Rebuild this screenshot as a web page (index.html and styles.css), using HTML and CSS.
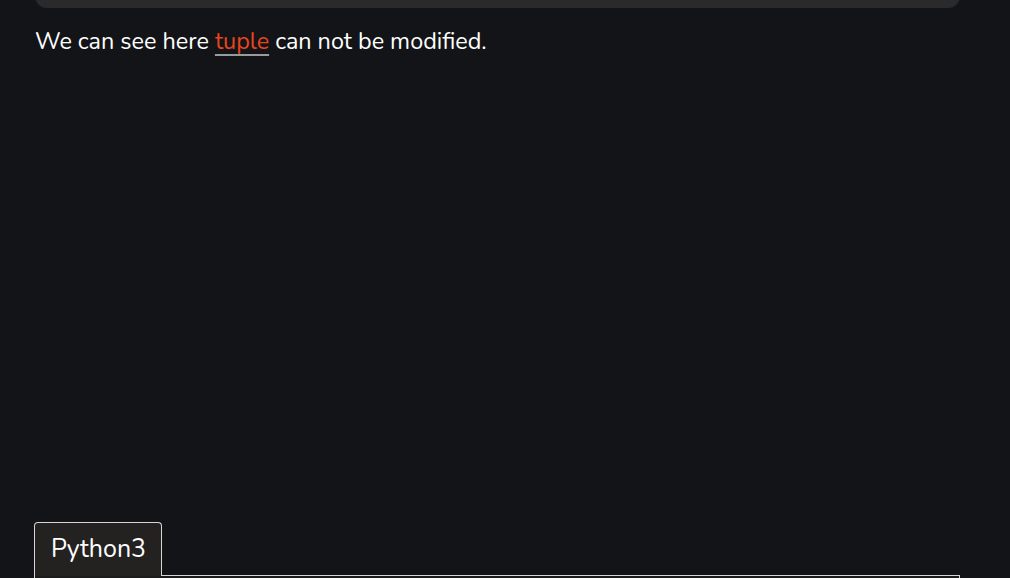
FILE: index.html
```html
<!DOCTYPE html>
<html>
<head>
<meta charset="utf-8">
<link rel="stylesheet" href="styles.css">
</head>
<body>
<div class="page">
  <div class="code-box"></div>
  <p class="text">We can see here <a class="link" href="#">tuple</a> can not be modified.</p>
  <div class="spacer"></div>
  <div class="tabs">
    <div class="tab">Python3</div>
    <div class="tab-fill"></div>
  </div>
  <div class="panel"></div>
</div>
</body>
</html>
```
FILE: styles.css
```css
html, body {
  margin: 0;
  padding: 0;
  background: #131417;
  overflow: hidden;
}
.page {
  width: 926px;
  margin-left: 34px;
  font-family: "Nunito", "Lato", "Noto Sans", sans-serif;
  color: #ffffff;
}
.code-box {
  margin-top: -20px;
  height: 28px;
  margin-left: 1px;
  background: #2a2a2c;
  border-radius: 12px;
}
.text {
  margin: 17px 0 0 1px;
  font-size: 23.4px;
  line-height: 32px;
}
.link {
  color: #e8441f;
  text-decoration: underline;
  text-decoration-color: #9a9a9a;
  text-decoration-thickness: 2px;
  text-underline-offset: 5px;
}
.spacer {
  height: 465px;
}
.tabs {
  display: flex;
  height: 54px;
}
.tab {
  box-sizing: border-box;
  width: 128px;
  height: 54px;
  padding: 11px 0 0 16px;
  background: #232220;
  border: 1px solid #d6d6d6;
  border-bottom: none;
  border-radius: 4px 4px 0 0;
  font-size: 25px;
  line-height: 30px;
}
.tab-fill {
  flex: 1;
  border-bottom: 1px solid #d6d6d6;
}
.panel {
  height: 40px;
  border-left: 1px solid #d6d6d6;
  border-right: 1px solid #d6d6d6;
  background: #1c1c1c;
}
```
